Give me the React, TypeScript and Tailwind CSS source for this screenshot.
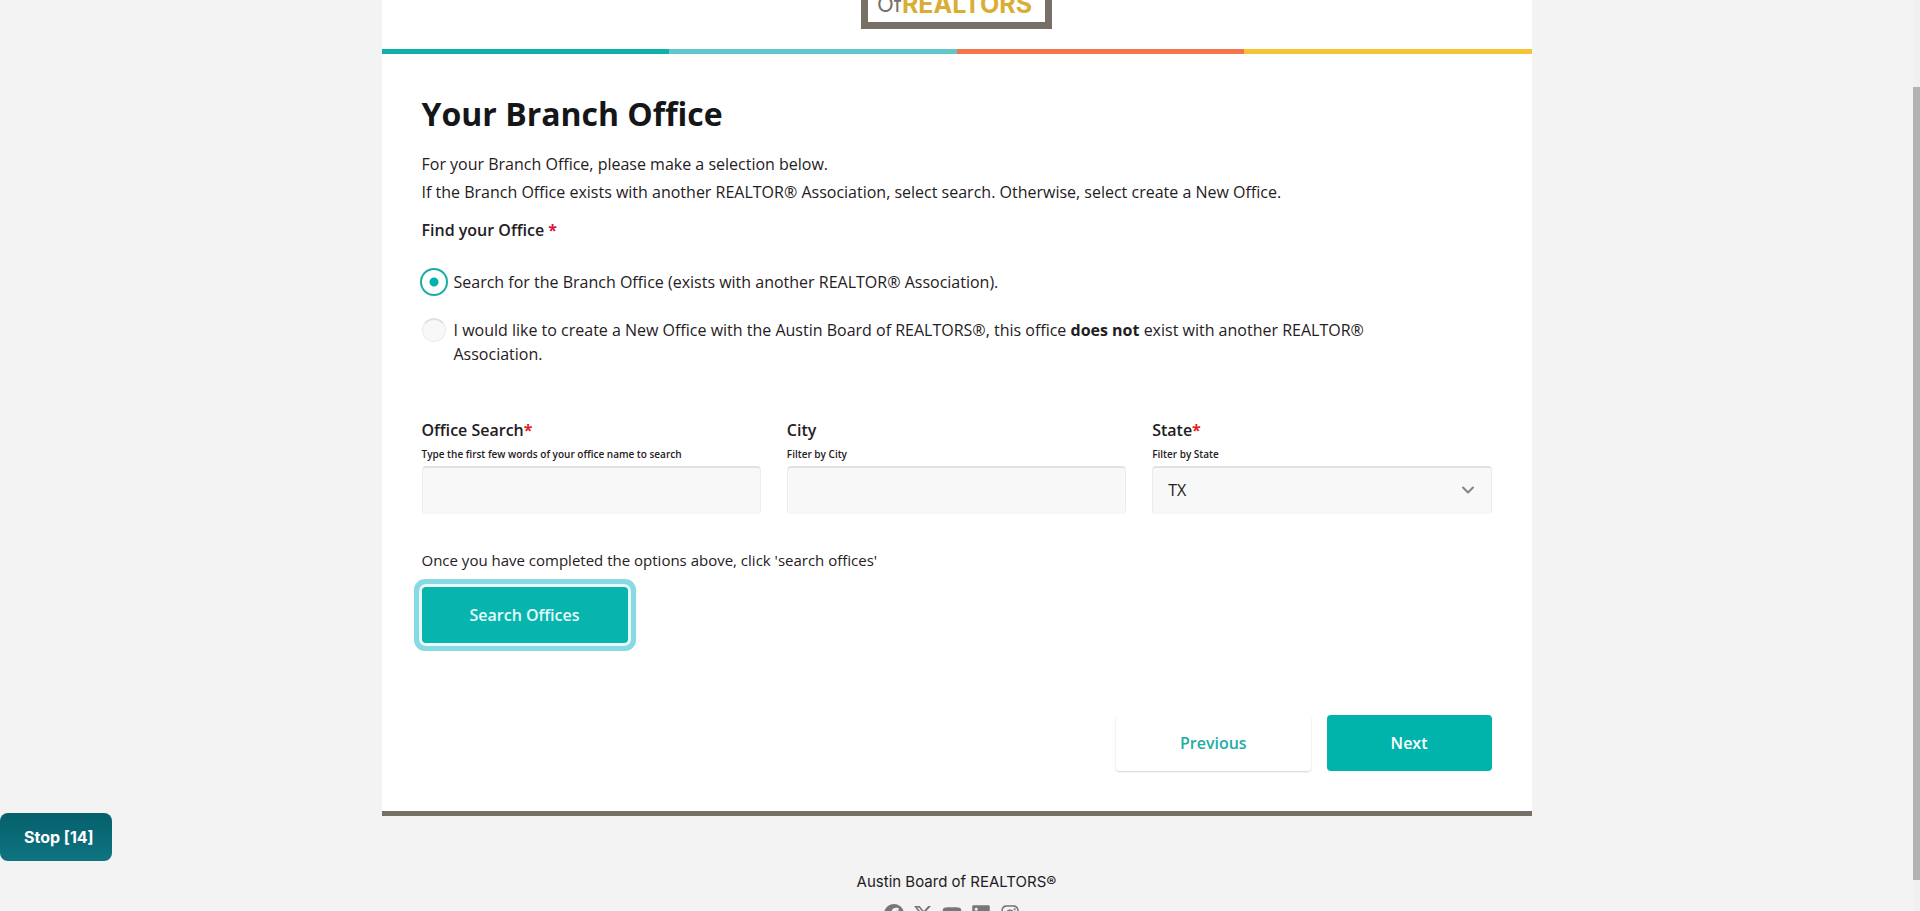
import { useState } from "react";
import type { ReactNode } from "react";
import { ChevronDown } from "lucide-react";
import { FaFacebook, FaInstagram, FaLinkedin, FaXTwitter, FaYoutube } from "react-icons/fa6";

const socialLinks = [
  { name: "Facebook", Icon: FaFacebook },
  { name: "X", Icon: FaXTwitter },
  { name: "YouTube", Icon: FaYoutube },
  { name: "LinkedIn", Icon: FaLinkedin },
  { name: "Instagram", Icon: FaInstagram },
];

const controlClass =
  "h-12 w-full appearance-none rounded border border-b-0 border-t-2 border-[#ececec] border-t-[#e2e2e2] bg-[#f8f8f8] px-[15px] pb-[2px] text-base text-[#1f2023] outline-none";

function Field({ id, label, hint, required, children }: {
  id: string;
  label: string;
  hint: string;
  required?: boolean;
  children: ReactNode;
}) {
  return (
    <div className="min-w-0">
      <label htmlFor={id} className="block">
        <span className="block text-base leading-6 font-semibold">
          {label}
          {required && <span className="font-bold text-[#e81c1c]">*</span>}
        </span>
        <span className="mt-1 block text-[10px] leading-4 font-semibold">{hint}</span>
      </label>
      <div className="mt-1">{children}</div>
    </div>
  );
}

function RadioOption({ value, selected, onSelect, children }: {
  value: string;
  selected: boolean;
  onSelect: (value: string) => void;
  children: ReactNode;
}) {
  return (
    <label className="flex items-start gap-2 pr-12">
      <input
        type="radio"
        name="office-mode"
        value={value}
        checked={selected}
        onChange={() => onSelect(value)}
        className="size-6 shrink-0 appearance-none rounded-full border border-t-2 border-[#ececec] border-t-[#e0e0e0] bg-[#f8f8f8] checked:border-0 checked:bg-[radial-gradient(circle,#00b4ac_0_4px,#ffffff_5px)] checked:ring-2 checked:ring-[#19ada4]"
      />
      <span>{children}</span>
    </label>
  );
}

export default function App() {
  const [mode, setMode] = useState("search");

  return (
    <div className="flex h-screen overflow-hidden bg-[#f3f3f3] font-['Open_Sans',sans-serif] text-base leading-6 text-[#1f2023]">
      <div className="flex min-w-0 flex-1 flex-col items-center overflow-hidden">
        <main className="w-full max-w-[1150px] shrink-0 border-b-[5px] border-[#777067] bg-white">
          <header className="flex h-[49px] flex-col items-center justify-end overflow-hidden pb-5">
            <div className="flex h-24 w-[191px] shrink-0 items-end justify-center border-[7px] border-[#777067] pr-1 pb-1 font-['Inter',sans-serif] whitespace-nowrap">
              <span className="text-[22px] leading-7 text-[#777067]">Of</span>
              <span className="text-[25px] leading-7 font-bold text-[#d9ae35]">REALTORS</span>
            </div>
          </header>
          <div className="grid h-[5px] grid-cols-4">
            <div className="bg-[#0fb0a6]" />
            <div className="bg-[#62c6cd]" />
            <div className="bg-[#f2764a]" />
            <div className="bg-[#f5c333]" />
          </div>

          <form className="px-10 pt-9 pb-10" onSubmit={(event) => event.preventDefault()}>
            <h1 className="text-[32px] leading-[48px] font-bold text-[#151618]">Your Branch Office</h1>
            <p className="mt-3 leading-7">
              For your Branch Office, please make a selection below.
              <br />
              If the Branch Office exists with another REALTOR® Association, select search. Otherwise, select create a
              New Office.
            </p>

            <fieldset className="mt-3">
              <legend className="font-semibold">
                Find your Office <span className="font-bold text-[#d4144b]">*</span>
              </legend>
              <div className="mt-7 flex flex-col gap-6">
                <RadioOption value="search" selected={mode === "search"} onSelect={setMode}>
                  Search for the Branch Office (exists with another REALTOR® Association).
                </RadioOption>
                <RadioOption value="create" selected={mode === "create"} onSelect={setMode}>
                  I would like to create a New Office with the Austin Board of REALTORS®, this office{" "}
                  <strong className="font-bold">does not</strong> exist with another REALTOR® Association.
                </RadioOption>
              </div>
            </fieldset>

            <div className="mt-[52px] grid grid-cols-3 gap-[26px]">
              <Field id="office" label="Office Search" hint="Type the first few words of your office name to search" required>
                <input id="office" type="text" className={controlClass} />
              </Field>
              <Field id="city" label="City" hint="Filter by City">
                <input id="city" type="text" className={controlClass} />
              </Field>
              <Field id="state" label="State" hint="Filter by State" required>
                <div className="relative">
                  <select id="state" defaultValue="TX" className={controlClass}>
                    <option>TX</option>
                  </select>
                  <ChevronDown
                    size={20}
                    strokeWidth={2.5}
                    className="pointer-events-none absolute top-[14px] right-[14px] text-[#858585]"
                  />
                </div>
              </Field>
            </div>

            <p className="mt-[34px] text-[15px] leading-6">
              Once you have completed the options above, click 'search offices'
            </p>
            <button
              type="button"
              className="mt-[15px] h-14 rounded bg-[#07b5ae] px-12 font-semibold text-[#e6fbfa] shadow-[0_0_0_3px_#e9fafb,0_0_0_8px_#87d9e3]"
            >
              Search Offices
            </button>

            <div className="mt-[72px] flex justify-end gap-4">
              <button
                type="button"
                className="h-14 rounded bg-white px-16 font-semibold text-[#1fada4] shadow-[0_1px_2px_rgba(0,0,0,0.18)]"
              >
                Previous
              </button>
              <button type="submit" className="h-14 rounded bg-[#00b4ac] px-16 font-semibold text-white">
                Next
              </button>
            </div>
          </form>
        </main>

        <footer className="mt-[54px] flex shrink-0 flex-col items-center gap-[10px] font-['Inter',sans-serif]">
          <p className="text-[15px] leading-6">Austin Board of REALTORS®</p>
          <nav className="flex gap-[9px] pr-[9px] text-[#777777]">
            {socialLinks.map(({ name, Icon }) => (
              <a key={name} href="#" aria-label={name}>
                <Icon className="h-5 w-auto" />
              </a>
            ))}
          </nav>
        </footer>
      </div>

      <div className="w-[7px] shrink-0 bg-[#f0f0f0] pt-[87px] pb-[31px]">
        <div className="h-full bg-[#b2b2b2]" />
      </div>

      <button
        type="button"
        className="fixed bottom-[50px] left-0 h-12 rounded-lg bg-linear-to-b from-[#05606c] to-[#0f7480] pr-[18px] pl-6 font-['Inter',sans-serif] text-base font-bold text-white"
      >
        Stop [14]
      </button>
    </div>
  );
}
